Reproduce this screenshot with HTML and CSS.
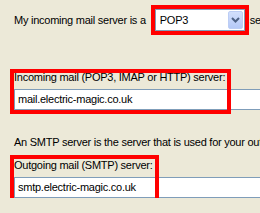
FILE: index.html
```html
<!DOCTYPE html>
<html>
<head>
<meta charset="utf-8">
<link rel="stylesheet" href="styles.css">
</head>
<body>
<div class="page">
  <div class="row1">
    <span class="txt">My incoming mail server is a</span>
    <div class="sel-wrap">
      <div class="select">
        <span class="val">POP3</span>
        <span class="btn"><svg width="9" height="6" viewBox="0 0 9 6"><path d="M1 1 L4.5 4.5 L8 1" fill="none" stroke="#4d6185" stroke-width="2"/></svg></span>
      </div>
    </div>
    <span class="txt after">server.</span>
  </div>

  <div class="field field-in">
    <div class="label">Incoming mail (POP3, IMAP or HTTP) server:</div>
    <div class="input">mail.electric-magic.co.uk</div>
    <div class="hl hl-in"></div>
  </div>

  <div class="note">An SMTP server is the server that is used for your outgoing e-mail.</div>

  <div class="field field-out">
    <div class="label">Outgoing mail (SMTP) server:</div>
    <div class="input">smtp.electric-magic.co.uk</div>
    <div class="hl hl-out"></div>
  </div>
</div>
</body>
</html>
```

FILE: styles.css
```css
html, body {
  margin: 0;
  padding: 0;
}
body {
  background: #ece9d8;
  font-family: "Liberation Sans", Arial, sans-serif;
  font-size: 11px;
  line-height: 13px;
  letter-spacing: -0.25px;
  color: #000;
  width: 260px;
  height: 213px;
  overflow: hidden;
}
.page {
  padding: 5px 0 0 14px;
  white-space: nowrap;
  overflow: hidden;
}
.row1 {
  display: flex;
  align-items: center;
  height: 30px;
}
.txt {
  flex: none;
}
.sel-wrap {
  flex: none;
  margin-left: 5px;
  border: 4px solid #ff0000;
}
.after {
  margin-left: 1px;
}
.select {
  box-sizing: border-box;
  width: 90px;
  height: 22px;
  border: 1px solid #7f9db9;
  background: #fff;
  display: flex;
  align-items: center;
  justify-content: space-between;
  padding: 0 1px 0 4px;
}
.val {
  flex: none;
}
.btn {
  box-sizing: border-box;
  width: 15px;
  height: 18px;
  border: 1px solid #bccdf5;
  border-radius: 2px;
  background: linear-gradient(#d2dffc, #b5c9f7);
  display: flex;
  align-items: center;
  justify-content: center;
}
.btn svg {
  display: block;
}
.field {
  position: relative;
}
.field-in {
  margin-top: 36px;
}
.label {
  height: 13px;
}
.input {
  box-sizing: border-box;
  margin-top: 5px;
  width: 260px;
  height: 21px;
  border: 1px solid #7f9db9;
  background: #fff;
  padding: 3px 0 0 3px;
}
.note {
  margin-top: 26px;
}
.field-out {
  margin-top: 10px;
}
.hl {
  position: absolute;
  left: -4px;
  top: -2px;
  border: 4px solid #ff0000;
  box-sizing: border-box;
  height: 45px;
}
.hl-in {
  width: 221px;
}
.hl-out {
  top: -4px;
  width: 149px;
  height: 47px;
}
```
